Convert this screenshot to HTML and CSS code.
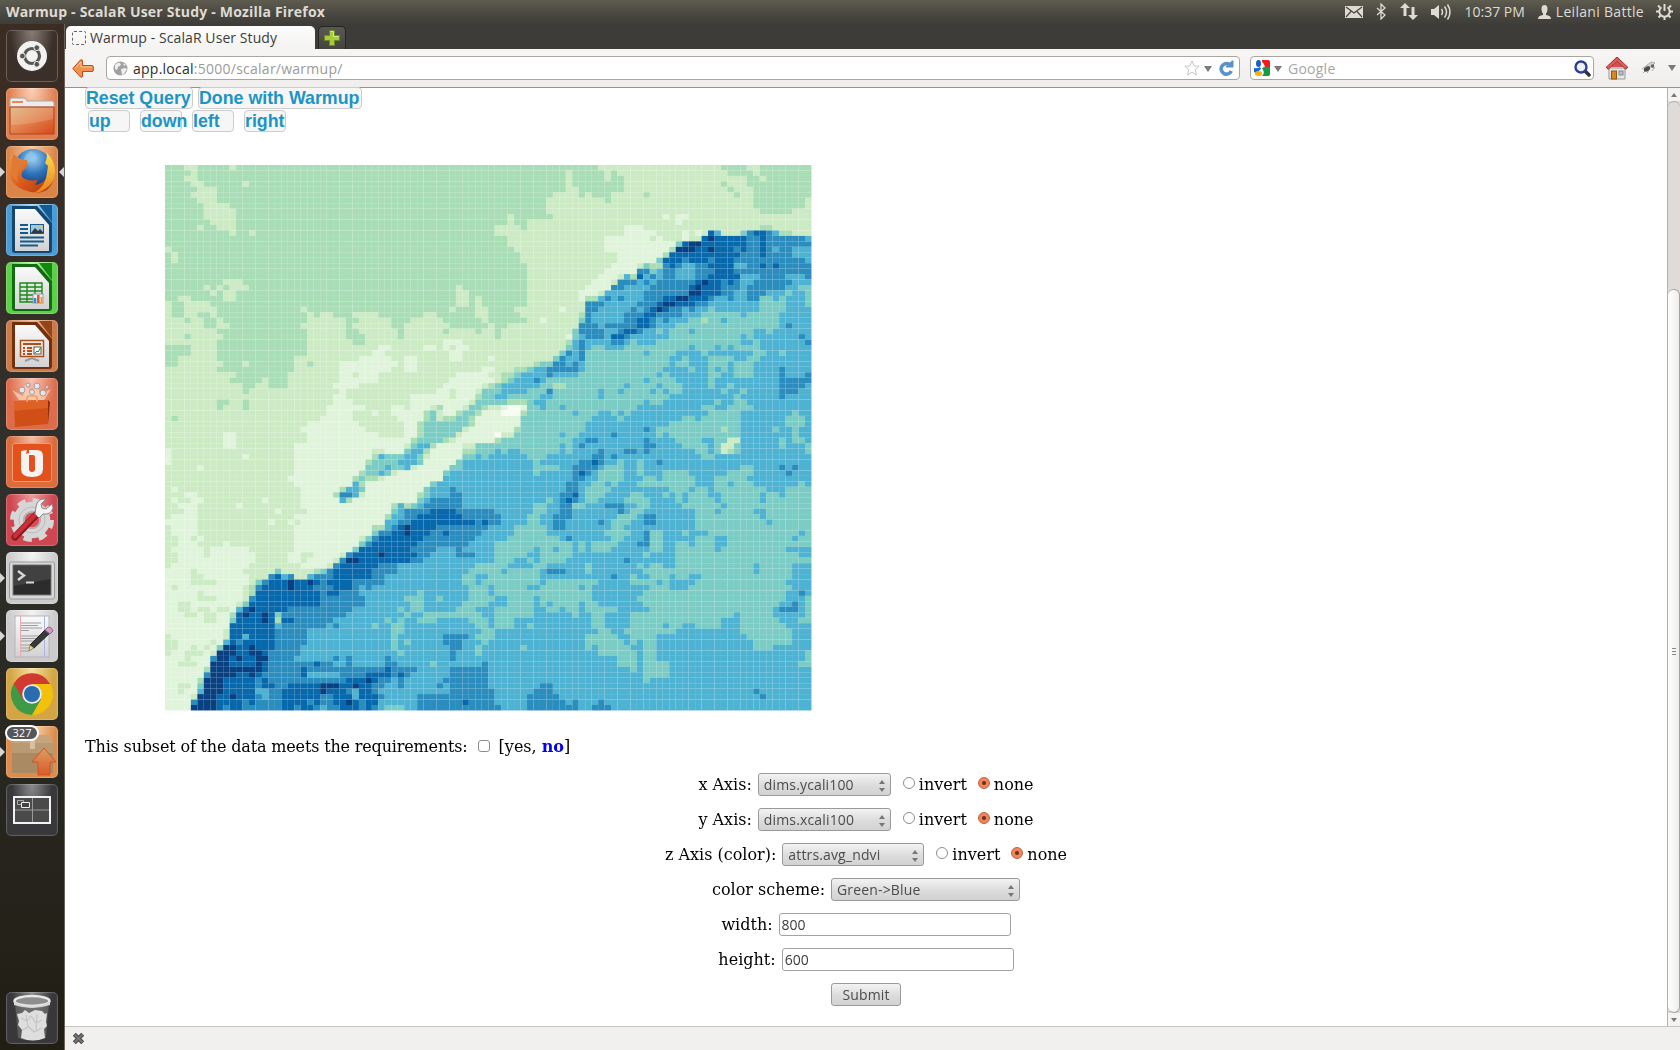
FILE: index.html
```html
<!DOCTYPE html>
<html lang="en">
<head>
<meta charset="utf-8">
<title>Warmup - ScalaR User Study</title>
<link rel="stylesheet" href="styles.css">
</head>
<body>
<svg width="0" height="0" class="defs" aria-hidden="true">
  <defs>
    <linearGradient id="paper" x1="0" y1="0" x2="0" y2="1"><stop offset="0" stop-color="#fafafa"/><stop offset="1" stop-color="#d2d2d2"/></linearGradient>
    <linearGradient id="folder" x1="0" y1="0" x2="1" y2="1"><stop offset="0" stop-color="#dcb078"/><stop offset=".45" stop-color="#e2844e"/><stop offset="1" stop-color="#d8481c"/></linearGradient>
    <linearGradient id="fox" x1="0" y1="0" x2="1" y2="1"><stop offset="0" stop-color="#f0a040"/><stop offset=".5" stop-color="#dd5a1c"/><stop offset="1" stop-color="#a8380c"/></linearGradient>
    <linearGradient id="flame" x1="0" y1="0" x2="0" y2="1"><stop offset="0" stop-color="#fbe24c"/><stop offset="1" stop-color="#e8801c"/></linearGradient>
    <radialGradient id="globe" cx=".5" cy=".25" r=".8"><stop offset="0" stop-color="#9fd4f4"/><stop offset=".5" stop-color="#2f74bc"/><stop offset="1" stop-color="#12336e"/></radialGradient>
    <linearGradient id="arrow" x1="0" y1="0" x2="0" y2="1"><stop offset="0" stop-color="#d8a060"/><stop offset="1" stop-color="#dc5a28"/></linearGradient>
  </defs>
</svg>

<header class="panel">
  <span class="panel-title">Warmup - ScalaR User Study - Mozilla Firefox</span>
  <div class="indicators">
    <svg class="i-mail" width="18" height="12" viewBox="0 0 18 12"><rect width="18" height="12" fill="#dfdbd2"/><path d="M1 1l8 6 8-6M1 11l5-5.500M17 11l-5-5.500" fill="none" stroke="#45443e" stroke-width="1.200"/></svg>
    <svg class="i-bt" width="10" height="17" viewBox="0 0 10 17"><path d="M1 5l8 7-4 4V1l4 4-8 7" fill="none" stroke="#dfdbd2" stroke-width="1.300"/></svg>
    <svg class="i-net" width="18" height="17" viewBox="0 0 18 17"><path d="M5 0l5 5H6.500v8h-3V5H0zM13 17l-5-5h3.500V4h3v8H18z" fill="#dfdbd2"/></svg>
    <svg class="i-vol" width="21" height="18" viewBox="0 0 21 18"><path d="M0 6h3l5-4v14l-5-4H0z" fill="#dfdbd2"/><path d="M10.500 6q2 3 0 6M13.500 3.500q4 5.500 0 11M16.500 1.500q5 7.500 0 15" fill="none" stroke="#dfdbd2" stroke-width="1.500"/></svg>
    <span class="clock">10:37 PM</span>
    <svg class="i-user" width="13" height="14" viewBox="0 0 13 14"><path d="M3.500 4q0-4 3-4t3 4q0 3-1.500 4.500V10q5 .5 5 4H0q0-3.500 5-4V8.500Q3.500 7 3.500 4z" fill="#dfdbd2"/></svg>
    <span class="user">Leilani Battle</span>
    <svg class="i-gear" width="17" height="17" viewBox="0 0 17 17"><g fill="none" stroke="#dfdbd2"><path d="M5.500 4.300a5.200 5.200 0 1 0 6 0" stroke-width="2"/><path d="M8.500 1v7M8.500 14v3M0 8.500h3M14 8.500h3M2 2.500l2 2M15 2.500l-2 2M2.500 14.500l2-2M14.500 14.500l-2-2" stroke-width="2"/></g></svg>
  </div>
</header>

<div class="desktop">
  <nav class="launcher">
    <div class="tile dash"><svg viewBox="0 0 52 52"><circle cx="26" cy="26" r="15" fill="#f2f2f2"/><circle cx="26" cy="26" r="7.500" fill="none" stroke="#5a5550" stroke-width="3.200"/><g fill="#5a5550" stroke="#f2f2f2"><circle cx="16.400" cy="26" r="2.900"/><circle cx="30.800" cy="17.700" r="2.900"/><circle cx="30.800" cy="34.300" r="2.900"/></g></svg></div>
    <div class="tile orange"><svg viewBox="0 0 52 52"><path d="M4 19v-7q0-2 2-2h12q2 0 3 3h25q2 0 2 2v4z" fill="#ececec" stroke="#a8a8a8"/><path d="M6 13h11v2H6z" fill="#f08850"/><path d="M4 19h44v27H4z" fill="url(#folder)" stroke="#b8441c"/><path d="M5 20h42v11Q28 36 5 37z" fill="#fff" opacity=".16"/></svg></div>
    <div class="tile orange running active"><svg viewBox="0 0 52 52"><circle cx="27" cy="22" r="19" fill="url(#globe)"/><path d="M25 5q7 3 5 8-6 1-8 5l-5-2q2-8 8-11z" fill="#93c8ea" opacity=".65"/><path d="M6 8q5 2 8 5l7 1 1 5-6 7q-2 5 3 7 9 3 13 0l-3 6q9-1 12-9l1-9 4 4q4 10-4 18Q33 50 18 44 4 38 3 26 3 15 6 8z" fill="url(#fox)"/><path d="M40 6q9 9 9 19 0 12-10 18-5 4-11 4 12-7 13-20l1-7-3-3q3-6 1-11z" fill="url(#flame)"/><path d="M7 8q4 2 6 6l8 1-1 3-7 6q-4 6 0 13Q4 31 5 22q0-7 2-14z" fill="#e07a34"/></svg></div>
    <div class="tile writer"><svg viewBox="0 0 52 52"><path d="M6 2h25l15 17v27q0 3-3 3H9q-3 0-3-3z" fill="#14466f"/><path d="M33 1h13v17z" fill="#155a90"/><path d="M9 5h20l14 16v26H9z" fill="url(#paper)"/><path d="M14 21h8M14 25h8M14 29h8M14 33.500h24M14 37.500h24M14 41.500h18" stroke="#155c8c" stroke-width="1.900"/><rect x="24" y="20" width="14" height="10" fill="#155c8c"/><rect x="25" y="21" width="12" height="8" fill="#9cc8e4"/><path d="M25 29l4-5 3 3 2-2 3 3v1z" fill="#2d3a40"/><circle cx="35" cy="23" r="1.300" fill="#f4c440"/></svg></div>
    <div class="tile calc"><svg viewBox="0 0 52 52"><path d="M6 2h25l15 17v27q0 3-3 3H9q-3 0-3-3z" fill="#136a12"/><path d="M33 1h13v17z" fill="#17880f"/><path d="M9 5h20l14 16v26H9z" fill="url(#paper)"/><path d="M14 21h22v19H14zM14 25h22M14 29h22M14 33h22M14 37h22M21 21v19M29 21v19" fill="none" stroke="#1c8a1a" stroke-width="1.400"/><rect x="27" y="32" width="10" height="9" fill="#eee" stroke="#999"/><path d="M29 36v5" stroke="#2f8cd8" stroke-width="2.500"/><path d="M32.300 33v8" stroke="#e05820" stroke-width="2.500"/><path d="M35.500 35v6" stroke="#e8a030" stroke-width="2"/></svg></div>
    <div class="tile impress"><svg viewBox="0 0 52 52"><path d="M6 2h25l15 17v27q0 3-3 3H9q-3 0-3-3z" fill="#70300e"/><path d="M33 1h13v17z" fill="#93441a"/><path d="M9 5h20l14 16v26H9z" fill="url(#paper)"/><rect x="14.500" y="20.500" width="23" height="16" fill="#f4e8e0" stroke="#a8501e" stroke-width="1.500"/><path d="M17 24h18" stroke="#a8501e" stroke-width="2"/><path d="M17 28h2M17 31h2M17 34h2M21 28h5M21 31h5M21 34h5" stroke="#b05020" stroke-width="2"/><rect x="28" y="27" width="7" height="7" fill="#fff" stroke="#555"/><path d="M29 33l2-2 1 1 2.500-4" fill="none" stroke="#1c8a1a"/><path d="M19 41l7-3 7 3" fill="none" stroke="#999" stroke-width="2"/></svg></div>
    <div class="tile store"><svg viewBox="0 0 52 52"><path d="M13 22L6 12l11 6 2-12 7 10 5-11 3 12 11-6-7 11z" fill="#ffe6c8" opacity=".6"/><g fill="#e4e4ea" stroke="#9c8c8c" stroke-width=".8"><circle cx="16" cy="12" r="3"/><circle cx="31" cy="8" r="3"/><circle cx="26" cy="14" r="2.500"/><circle cx="37" cy="15" r="3"/><circle cx="22" cy="7" r="2"/><circle cx="41" cy="9" r="1.500"/></g><path d="M8 23l34-1v24l-33 3z" fill="#d24e17"/><path d="M42 22l2 2-2 22z" fill="#8a2c08"/><path d="M8 23l34-1v8L8 33z" fill="#e2682c" opacity=".7"/><path d="M21 24v-4q0-2 2-2h6q2 0 2 2v4" fill="none" stroke="#f0a060" stroke-width="1.600"/></svg></div>
    <div class="tile one"><svg viewBox="0 0 52 52"><rect x="6.500" y="7.500" width="39" height="38" rx="2" fill="#e3511d" stroke="#f49a6c"/><path d="M15 15l6-1-1 4 3-1v16q0 3 3 3t3-3V21q0-2-2-2h-4v-5h8q6 0 6 6v13q0 8-11 8t-11-8z" fill="#f6f2f0"/></svg></div>
    <div class="tile settings"><svg viewBox="0 0 52 52"><circle cx="26" cy="26" r="13.500" fill="none" stroke="#d6d6d6" stroke-width="9.500"/><circle cx="26" cy="26" r="19.500" fill="none" stroke="#d6d6d6" stroke-width="5" stroke-dasharray="8.300 7.020"/><circle cx="26" cy="26" r="13" fill="none" stroke="#bdbdbd" stroke-width="1"/><circle cx="26" cy="26" r="8" fill="#d5525a" stroke="#b5b5b5" stroke-width="1.500"/><path d="M9 43l21-22" stroke="#8e1820" stroke-width="7" stroke-linecap="round"/><path d="M9 42l21-22" stroke="#c8303a" stroke-width="4.500" stroke-linecap="round"/><path d="M29 20l4 4 4-4q8 1 10-6l-1-4-6 5-4-1-1-4 5-5q-9-1-10 8z" fill="#f2f2f2" stroke="#888" stroke-width="1"/></svg></div>
    <div class="tile silver running"><svg viewBox="0 0 52 52"><rect x="3.500" y="10" width="45" height="37" rx="2" fill="#d8d8d8" stroke="#9a9a9a"/><rect x="7" y="13" width="38" height="30" fill="#2c2c2c" stroke="#777"/><path d="M8 14h36v13L8 34z" fill="#fff" opacity=".1"/><path d="M12 19l6 4.500-6 4.500" fill="none" stroke="#d8d8d8" stroke-width="2.400"/><path d="M20 30.500h8" stroke="#d8d8d8" stroke-width="2"/></svg></div>
    <div class="tile silver running"><svg viewBox="0 0 52 52"><rect x="9" y="6" width="34" height="41" fill="url(#paper)" stroke="#b5b5b5"/><path d="M14.500 6v41" stroke="#eda8b0"/><path d="M38.500 6v41" stroke="#aab4ea"/><path d="M15 13h20M15 15.500h17M15 18h21M15 20.500h8M15 26h21M15 28.500h16M15 31h18M15 35h12M15 38h9M15 41h8" stroke="#9e9e9e"/><path d="M24 35l17-17 4 4-17 16z" fill="#3a3a3a" stroke="#222"/><path d="M24 35l4 3-5 3z" fill="#e8d878" stroke="#444" stroke-width=".5"/><path d="M39 20l3-3q4 0 5 4l-3 3z" fill="#d898c8" stroke="#8a6a80"/></svg></div>
    <div class="tile chrome"><svg viewBox="0 0 52 52"><circle cx="26" cy="26" r="21" fill="#f2c10c"/><path d="M26 26L7.800 15.500A21 21 0 0 0 26 47l9-15.700z" fill="#3f9a48"/><path d="M26 26l-9 5.300L7.800 15.500A21 21 0 0 1 44.200 16H26z" fill="#d13a30"/><circle cx="26" cy="26" r="9.800" fill="#e8eef2"/><circle cx="26" cy="26" r="8" fill="#2a6cb0"/></svg></div>
    <div class="tile updater running"><svg viewBox="0 0 52 52"><path d="M6 17l4-8h33l4 8z" fill="#c6a57c"/><path d="M6 17h41v30H6z" fill="#a98a62"/><path d="M6 17h41v10H6z" fill="#b99a72"/><path d="M24 9h5v14h-5z" fill="#d8c0a0"/><path d="M38 22l12 14h-6v13H32V36h-6z" fill="url(#arrow)" stroke="#d4502a"/></svg><span class="badge">327</span></div>
    <div class="tile workspaces"><svg viewBox="0 0 52 52"><rect x="8" y="13" width="36" height="26" fill="#4a4a4a" stroke="#f2f2f2" stroke-width="2"/><path d="M9 26h34M26.500 14v24" stroke="#999"/><path d="M11.500 16.500h6v4h-6z" fill="none" stroke="#aaa"/><path d="M15.500 18.500h8v5h-8z" fill="#444" stroke="#eee"/></svg></div>
    <div class="tile trash"><svg viewBox="0 0 52 52"><path d="M9 9l3 37q13 5 28 0l3-37z" fill="#77777a" opacity=".55"/><path d="M11 22l5-1 3-3 4 3 6-3 7 1 3 3 2-1-1 9 1 4-3 3 1 9q-12 5-24 0l1-8-4-5 1-4z" fill="#dedede"/><path d="M15 26l6 3 4-5 5 7 6-3M16 38l7-3 5 5 8-4M20 23l2 12M31 22l-1 17" fill="none" stroke="#c4c4c4" stroke-width="1.100"/><ellipse cx="26" cy="9" rx="17.500" ry="5" fill="#8e8e8e" stroke="#e8e8e8" stroke-width="2.500"/><path d="M8 10q18 8 36 0v3q-18 6-36 0z" fill="#d8d8d8"/></svg></div>
  </nav>

  <main class="window">
    <div class="tabs">
      <div class="tab"><span class="favicon"></span><span class="tab-text">Warmup - ScalaR User Study</span></div>
      <div class="newtab"><svg width="16" height="16" viewBox="0 0 16 16"><path d="M5.500.5h5v5h5v5h-5v5h-5v-5h-5v-5h5z" fill="#a4cc3c" stroke="#6c8a24"/><path d="M6.500 1.500h3v5h5" fill="none" stroke="#d4ec94"/></svg></div>
    </div>

    <div class="toolbar">
      <svg class="back" width="22" height="19" viewBox="0 0 22 19"><path d="M.8 9.500L8.500 1q2-1 2 1v4.500H20q1.300 0 1.300 1.300v3.400q0 1.300-1.300 1.300h-9.500V17q0 2-2 1z" fill="#f0914e" stroke="#c04c1c"/><path d="M3 9.500L9 3v5h11" fill="none" stroke="#fcd0a0" stroke-width=".8"/></svg>
      <div class="urlbar">
        <svg class="globe" width="15" height="15" viewBox="0 0 15 15"><circle cx="7.500" cy="7.500" r="7" fill="#a0a0a0"/><path d="M2 4q3-3 5-2l1 2-3 2-1 3-2-1zM8 8l4-1 2 1-3 5-2 1zM10 2l3 2-2 1z" fill="#efefef"/></svg>
        <span class="url"><b>app.local</b>:5000/scalar/warmup/</span>
        <svg class="star" width="16" height="16" viewBox="0 0 16 16"><path d="M8 1l2.100 4.800 5.100.5-3.900 3.500 1.200 5.200L8 12.300 3.500 15l1.200-5.200L.8 6.300l5.100-.5z" fill="#fdfdfd" stroke="#c6c6c6"/></svg>
        <i class="caret c1"></i>
        <svg class="reload" width="16" height="16" viewBox="0 0 16 16"><path d="M11.500 4.500A5.300 5.300 0 1 0 13.300 11" fill="none" stroke="#5c92cc" stroke-width="3.600"/><path d="M8 7.500V6l3-2.500 3-3H15.500v7z" fill="#5c92cc"/></svg>
      </div>
      <div class="search">
        <svg class="goog" width="16" height="16" viewBox="0 0 16 16"><path d="M8 0h6q2 0 2 2v5H11q-1-4-3-5z" fill="#ee1c1c"/><path d="M8 8q3-2 8-1v7q0 2-2 2H8q3-3 1-6z" fill="#159a45"/><ellipse cx="4.500" cy="3.500" rx="2.500" ry="3.600" fill="#1660c8"/><path d="M0 8q3 1 6-1l1 2-5 4-2-1z" fill="#1a64cc"/><ellipse cx="4.500" cy="13.500" rx="3.600" ry="2.500" fill="#f4b400"/></svg>
        <i class="caret c2"></i>
        <span class="search-text">Google</span>
        <svg class="lens" width="17" height="17" viewBox="0 0 17 17"><path d="M11 11l4 4" stroke="#333" stroke-width="3.500" stroke-linecap="round"/><circle cx="7" cy="7" r="5.500" fill="#eef2fa" stroke="#2c3c98" stroke-width="2.400"/></svg>
      </div>
      <svg class="home" width="22" height="23" viewBox="0 0 22 23"><path d="M3 11h16v11H3z" fill="#e6e6e6" stroke="#999"/><rect x="5.500" y="14" width="5" height="8" fill="#d48a1c" stroke="#8c5a10"/><rect x="13" y="14" width="4" height="4" fill="#aac4dc" stroke="#888"/><path d="M3.500 10L11 3l7.500 7z" fill="#d45050"/><path d="M1 11.500L11 2l10 9.500" fill="none" stroke="#8e2020" stroke-width="3.600"/><path d="M1.500 11L11 2.200 20.500 11" fill="none" stroke="#dc5c5c" stroke-width="2.600"/></svg>
      <svg class="bug" width="16" height="14" viewBox="0 0 16 14"><path d="M1 8l4-3M2 12l4-4M6 12l2-3M11 10l2-3M14 7l-4-1" stroke="#aaa"/><path d="M5 5l5-4 4 1-4 4z" fill="#d4d4d4" stroke="#aaa"/><ellipse cx="6" cy="8" rx="3.400" ry="2.200" fill="#4a4a4a" transform="rotate(-30 6 8)"/><circle cx="11.500" cy="5" r="1.800" fill="#666"/></svg>
      <i class="caret c3"></i>
    </div>

    <div class="viewport">
      <div class="page">
        <div class="btns first"><span class="btn">Reset Query</span><span class="btn done">Done with Warmup</span></div>
        <div class="btns moves"><span class="btn">up</span><span class="btn">down</span><span class="btn">left</span><span class="btn">right</span></div>
        <canvas id="map" class="map" width="647" height="546"></canvas>
        <div class="ask"><span class="q">This subset of the data meets the requirements:</span><i class="check"></i><span class="yn">[yes, <b>no</b>]</span></div>
        <form class="form">
          <div class="row"><span>x Axis:</span><div class="select w1"><span>dims.ycali100</span></div><i class="radio"></i><span>invert</span><i class="radio on"></i><span>none</span></div>
          <div class="row"><span>y Axis:</span><div class="select w1"><span>dims.xcali100</span></div><i class="radio"></i><span>invert</span><i class="radio on"></i><span>none</span></div>
          <div class="row"><span>z Axis (color):</span><div class="select w2"><span>attrs.avg_ndvi</span></div><i class="radio"></i><span>invert</span><i class="radio on"></i><span>none</span></div>
          <div class="row"><span>color scheme:</span><div class="select w3"><span>Green-&gt;Blue</span></div></div>
          <div class="row"><span>width:</span><div class="input">800</div></div>
          <div class="row"><span>height:</span><div class="input">600</div></div>
          <div class="row"><div class="submit">Submit</div></div>
        </form>
      </div>
      <div class="scroll"><div class="up"><i></i></div><div class="gap"></div><div class="thumb"><i></i><i></i><i></i></div><div class="down"><i></i></div></div>
    </div>

    <footer class="status"><svg width="13" height="13" viewBox="0 0 13 13"><path d="M2.300 2.300l8.400 8.400M10.700 2.300l-8.400 8.400" stroke="#4a4a4a" stroke-width="4.200"/><path d="M2.600 2.600l7.800 7.800M10.400 2.600l-7.800 7.800" stroke="#777" stroke-width="2"/></svg></footer>
  </main>
</div>
<script src="map.js"></script>
</body>
</html>
```

FILE: map.js
```js
// One string per grid row: each run is its first column followed by its shade, a (lowest) to i (highest).
const rows = [
"0d3c5d10c11d67c86d90c92d",
"0d4c5d62c63d68c69d70c87d91c92d",
"0d3c5d62c63d68c69d71c90d92c93d",
"0d4c6d12c13d62c63d71c86d87c90d",
"0d5c8d62c64d71c87d88c91d",
"0d4c8d60c64d65c66d69c74d75c88d89c91d",
"0d5c8d59c68d69c91d99c",
"0d6c10d59c91d99c",
"0d6c11d59c92d97c",
"0d6c11d53c54d60c77b78c79b81c",
"0d7c11d53c54d56c79b80c",
"0d5c6d8c11d51c55d56c71b74c92d94c",
"0d10c11d13c14d51c71b76c80b81c82b83c84h85f86c89e90g91h93g94f95d97c",
"0d53c68b75c76b77c80b81c83h84i85h90g92h93g99f",
"0d53c68b79e80h81i83h90g92h93g",
"0c1d54c68b78d79i82h84i85h88g89h90g92h93g94f95g97f",
"0d1c2d55c70b77d78h89g92h93g97f",
"0d1c2d55c70b76e77h80g81h84g85h88g99f",
"0d56c69b73c74e75d77g78h79g80f82g84h88f90g92h93g94h95g",
"0d56c68b73g75e76f77g79f82g85h88g",
"0d56c67b70c71f72d73h74f75g76f77g79f82g84h89f92g96f99g",
"0d9c12d56c66b69c70g73f74g75f76g82h83i84h86g87h88g89f91g97f",
"0d6c7d8c9d10c13d45c46d56c65b69g71f75g81h82i83h86g89f90g96f98e",
"0d7c8d9c11d45c47d56c64b67c68f74g81i83h86g88f90g93f96e97f99e",
"0d2c4d9c11d45c47d48c49d56c64b65d67f68g69f70g71f74g77h79i81h84g85f87g88f90g92e94f95e96f99e",
"0c1d3c7d45c47d48c49d56c65g68f73g76h77i79h82g84f92e96f99e",
"0c1d3c8d21c22d44c45d48c50d54c61b62c65g67f72g73f74g75h76i77h78g80f81g82f84e85f92e96f",
"0c1d3c5d7c8d22c23d24c26d29c33d40c42d48c50d55c64d65g66f71g74h76g80f83e89f90e95f",
"0c3d4c6d8c9d22c28d30c35d38c43d49c50d56c58b59c64e65g66f71g73h75g76f77g78f81e83d84e86f87e95f",
"0c6d8c10d21c28d29c35d37c44d50c51d53c64g67f68g73h75g76f79e95f96g97f",
"0c8d22c28d30c36d37c43d44c48d49c51d52c63e64g68f70g71h73g74f76e77f78e81f82e91f93e94f",
"0c3d4c9d22c28d31c36d37c51d52c62b63e64f65g68f69h71g72f78e89f90e91f98g99f",
"0c8d22c29d31c43b46c62d63f64g65f69g71f72e73f76e89f91e92f99g",
"0d4c8d22c33b35c40b42c43b44c45b47c62e63f64g65f66e68f71e81f82e85f86e87f88e90f90e92f",
"0d4c8d22c32b34c44b46c61e62g63f64g65e74f75e79f83e84f91e93f95e96f",
"0d2c8d20c30b35c37b39c44b46c50b51c60e61g62f64g65e78f80e81f84e88f90e92f",
"0d2c9d12c13d20c22d23c27b36c37b39c57d58e60g62f63g64f65e78f79e81f84e87f88e91f",
"0c8d20c27b35c37b39c49b51c54d56e57f59g64f65e77f81e82f84e85f86e87f88e91f95g96f",
"0c11d19c27b29c30b33c45b50c52d54e55f59g60f64e76f77e78f84e86f88e91f95g96f99g",
"0c10d15c16d19c27b33c44b51c52d53e54f57g58f59e74f75e77f77e79f84e85f95g",
"0c12d14c16d19c26b30c43b49c50d51e52f58e60d62e71f72e76f77e80f84e85f87e88f95g99f",
"0c12d13c27b28c42b44c45b48c49e52f56e59g60e67f68e70f71e75f76e77f78e80f86e87f89e90f95g98f",
"0c26b28c38b44c45b48d49e51f53e58f60e67f68e78f88e89f95g96f",
"0c8d10c12d13c26b29c38b47c48e53d56e57f59e74f75e77f85e86f88e90f",
"0c8d9c12d13c25b31c35b37c38b41c42d43b46c47e49d50c52b53a55b56e58f59e61f62e73f83e85f87e91f",
"0c25b29c32b33c35b40d41e42c43b45d46e48d49b52a55d56e63f64e67f69e70f71e72f84e89f97e98f",
"0c1d2c24b29c36b40d41e42c43d45e47d48b55e66f70e71f80e82f83e89f96e99f",
"0c22b30c37b39d40e47d48b55e65f78e89f96e99f",
"0c21b31c37b39d40e46c47b54d55e65f74g75f76e77f77e86d87e89f94e95f97e98f",
"0c9b11c22b33c37b39d40e45c46b51a52c54e61f62e64f69g70f76e77f78e89f97e98f",
"0c9b11c22b38d39e43d44c45b51d52e63f65g67f74g75f79e83f85e87c89f95e96f97e99f",
"0c9b11c20b37c38e39f41d42b46c48e61f62e63f64g65f74g76f80e84f85e86c88e89f95e96f99e",
"0b1c20b32c34b37e38f40d41b46d48e51f52e53f55e61f62e63f67g68f71g73f74g75f82e84f85e86c87d88e89f99e",
"0b1c12b13c20b32d33f34e37f39e40c41b46e48f49e50f56e59f66g68f69g70f83e85f",
"0b1c20b31d32e36f39e40b45e46f57e58f64g66h67g68f70e71f73e74f76g77f",
"0c5b6c20b31e34f35e37f38c39b44e46f57e61f63g67f68e71f73e74f89e91f95g96f97g98f",
"0c20b30d31e33f34e35c36b43e44f57e58f63g64h65g66f67e71f73e74f77e81f87e91f96g97f",
"0c19b29d30e31d33c34b43f63g65f67e71f74e76f77e82f85e90f",
"0c20b29f30d31b41e42f62g64f66e68f69e70f73e82f85e87f88e91f98e99f",
"0c1b2c21b27d28f30e31b40e41f44g45f62g64f65e69f78e81f82e84f85e93f96e",
"0c3b5c21b26d27g29f30c31b39d40e41f44g46f61g63h64f65e68f72e74f77e78f79e80f81e84f86e92f93e95f96e",
"0c1b2c4b6c15b16c21b27f28d29b39e40f41g46f59e60f61g62h63g64f65e67f71e75f79e80f81e85f86e92f93e",
"0c2b5c11b12c21b35d36f37d38e39f40g46f57e59f61g63e65f68g71f73e75f80e82f82e86f87e",
"0c3b5c17b18c22b35e36f37g41h45g51f57e59f61g63f70g71f72e74f82e85f86e91f93e",
"0c1b5c20b34d35f37g39h46g52f56e58f60g63f70e73f74g76f82e92f93e",
"0b5c16b17c19b20c21b34f36g38h48g49h50g52f56e58f60g62f67g68f69e72f74g76f82e93f94e",
"0c1b5c20b32d34f35g36h37i38h42g43h43g50f54e59f60g62f69e71f72e72f82e",
"0c1b5c20b32e33g35h37i38h41g43h44g49f54e59f68e72f74g75e77f80e81f84e98f99e",
"0c2b4c5b6c20b30c31e32g33h40g48f53e61f62g63f69e71f74g75e77f82e85f87e97f98e",
"0c2b5c9b10c20b30e31g32h39g47f51e63f64e65f66e70f73g75e77f79e81f82e85f87e",
"0c1b6c7b13c20b29e30h38g42f45g46f51e57f58e60f61e63f64e65f66e69f75e77f79e85f86e96f",
"0c2b6c7b14c19b21c23b27c28g29h33i34h39g41f45g48f51e56f58e63f74e75f79e98f",
"0c2b14c19b21c22b26c27g28i30h38g40f51e54f56e57f58e62f71g72f79e",
"0c1b13c21b25c26g27h33g36f48e53f57e59f65e66f73e74f75e77f79e91f92e97f",
"0b4c5b12c17e18c23d24e25g26h32g36f47e52f53e58f59g62f65e66f74e91f92e97f",
"0b4c6b13c16g17h18f19g20c22f23g26h32g34f46e48f50e58f69g70f72e73f75e78f79e81f83e97f",
"0b4c8b13c14e15g16h19i20h22i23h24g25h29g34f46e48f49e58f59e67f72e76f77e78f82e96f",
"0b1c2b12c13d14g15h19i20h23g26h29g30f31g32f47e50f51e56f58e64f65e66f75e78f81e97f",
"0b5c6b12c13d14h24g25h27g30f39e40f47e50f51e66f74e96f98g99f",
"0b5c8b12c13g14h24g31f37e40f42e43f47e51f53e57f58e66f73e96f99e",
"0b2c4b11c12e13h24g31f38e40f46e50f53e57f58e59f60e64f65e67f74e95f97g98f99e",
"0b2c4b5c7b8c10b11f12h13i14h19g29f36e37f38e40f45e48f51e57f59e61f62e64f65e70f75e94f95g98f99e",
"0b3c5b6c8b10d11h12i13h15i16h17e18g28f37e38f40e49f51e57f63e64f66e68f72e88f89e94f99e",
"0b6c8b10e11h15i16h17d18h20g26f34e35f36e37f39e42f47e50f51e54f66e68f72e86f89e95f98e",
"0b10h17f18g25f26g27f32e33f35e37f48e50f51e54f56e57f66e68f72e77f78e80f82e86f89e96f",
"0b9c10h17g22f35e37f49e51f67e69f71e79f89e97f",
"0c1b9c10h12f13h17g22f35e36f43g47f48e51f65e70f72e76f90e97f",
"0c2b7c8b9f10h11g12h17g22f35e36f37e38f43g46f49e50f65e71f72e73f74e76f91e97f",
"0c2b4c5b6c7b8e9i11h13i14h17g21f35e36f44g46f48e49f55e56f65e66f67e72f74e76f91e94f",
"0c1b3c6b7c8i11h13i15h16g21f36e37f44g45f48e49f67e73f74e76f99e",
"0b3c4b7g8i10h11i12h14i16g20f26g27f28g29f34g35f44g45f70e73f74e76f99e",
"0b2c5b7i10h14i15h16g23h24g26f28g29f34g36f41e42f49g50f70e73f74e78f98e",
"0b6d7i15h16g21h22g34h35g39f44g50f72e73f74e78f",
"0b6g7i11h13i14h15g21h22f27g31h35g36h37g38f44g50f74e78f",
"0b5d6i9h14g15h16g28h31i32h33g35f36g37f43g50f74e75f",
"0b2c4b5e6i9h14g15h17g19h24i27h29i30h32g34f36g37f42g43f44g50f58g60f",
"0b2c3b5f6i9h14f16g18h24i25h28g29f30h32g33f44g51f57g60f91g92f",
"0b4c5i8h10i11h14g15f16g18h24g26h29f30h33g34f39g51f56g61f92g93f",
"0b4g5i8h12g13h14g18h22g23h24g26h28i29h30g31h33f39g46h47g51f56g62f63g64f67g68f",
"0b4i8h9g10h12g18h20g21h23g24f25g27h30g31h32g33f34e37f39g52f56g64f66g69f"
];
const shades = ["#f7fcf0", "#e0f3db", "#ccebc5", "#a8ddb5", "#7bccc4", "#4eb3d3", "#2b8cbe", "#0868ac", "#084081"];
const w = 640 / 99, h = 540 / 99;
const ctx = document.getElementById("map").getContext("2d");
rows.forEach((row, y) => {
  const runs = [...row.matchAll(/(\d+)([a-i])/g)];
  runs.forEach((run, k) => {
    const end = k + 1 < runs.length ? +runs[k + 1][1] : 100;
    ctx.fillStyle = shades[run[2].charCodeAt(0) - 97];
    for (let x = +run[1]; x < end; x++) ctx.fillRect(x * w, y * h, w, h);
  });
});
```

FILE: styles.css
```css
* { box-sizing: border-box; }
body { margin: 0; width: 1680px; height: 1050px; overflow: hidden; display: flex; flex-direction: column; background: #fff; font-family: "Open Sans", "Noto Sans", sans-serif; }
svg { display: block; flex: none; }
.defs { position: absolute; }
span { white-space: nowrap; }

.panel { height: 24px; flex: none; display: flex; align-items: center; justify-content: space-between; padding: 0 7px 1px 6px; background: linear-gradient(#5e5b4f, #47453f 65%, #3e3d38); color: #dfdbd2; font-size: 14px; }
.panel-title { font-weight: 700; letter-spacing: 0.19px; }
.indicators { display: flex; align-items: center; }
.i-bt { margin-left: 13px; }
.i-net { margin-left: 14px; }
.i-vol { margin-left: 13px; }
.clock { margin-left: 12px; }
.i-user { margin-left: 13px; }
.user { margin-left: 5px; letter-spacing: 0.3px; }
.i-gear { margin-left: 12px; }

.desktop { flex: 1; min-height: 0; display: flex; }
.launcher { width: 65px; flex: none; display: flex; flex-direction: column; gap: 6px; padding: 6px 0 6px 6px; background: linear-gradient(#3c2c22, #2f302c 45%, #211e14); border-right: 1px solid #6c625c; }
.tile { position: relative; width: 52px; height: 52px; flex: none; border-radius: 5px; box-shadow: inset 0 0 1px 1px rgba(255,255,255,.22); }
.tile svg { width: 52px; height: 52px; }
.dash { background: radial-gradient(ellipse at 50% 0, #8a7f78, transparent 60%), #3b2f29; box-shadow: inset 0 0 0 1px #6b625b; }
.orange { background: radial-gradient(ellipse at 50% 0, #fbd2b8, transparent 65%), #df7e4f; }
.orange.running { background: radial-gradient(ellipse at 50% 0, #f8c8a0, transparent 65%), #db8448; }
.writer { background: radial-gradient(ellipse at 50% 0, #a4d8f6, transparent 60%), #4a9cd6; }
.calc { background: radial-gradient(ellipse at 50% 0, #b4f6a0, transparent 60%), #5cd048; }
.impress { background: radial-gradient(ellipse at 50% 0, #eeb894, transparent 60%), #cb7b4a; }
.store { background: radial-gradient(ellipse at 50% 0, #f8c4b4, transparent 65%), #dd6c4a; }
.one { background: radial-gradient(ellipse at 50% 0, #f4c0a4, transparent 60%), #dc6b3d; }
.settings { background: radial-gradient(ellipse at 50% 0, #f09ca0, transparent 60%), #cd4650; }
.silver { background: radial-gradient(ellipse at 50% 0, #f4f4f4, transparent 65%), #cccacc; }
.chrome { background: radial-gradient(ellipse at 50% 0, #f8e0a0, transparent 60%), #d3a544; }
.updater { background: radial-gradient(ellipse at 50% 0, #fbd8b0, transparent 65%), #dc8c4c; }
.workspaces, .trash { background: radial-gradient(ellipse at 50% 0, #8c8c8e, transparent 55%), #38383a; }
.trash { margin-top: auto; }
.running::before { content: ""; position: absolute; left: -6px; top: 21px; border: 5px solid transparent; border-left-color: #d6d6d6; border-right: 0; }
.active::after { content: ""; position: absolute; right: -6px; top: 21px; border: 5px solid transparent; border-right-color: #d6d6d6; border-left: 0; }
.badge { position: absolute; left: -1px; top: -1px; width: 34px; height: 16px; border: 2px solid #fff; border-radius: 8px; background: #55565a; color: #fff; font-size: 11px; line-height: 12px; text-align: center; }

.window { flex: 1; min-width: 0; display: flex; flex-direction: column; }
.tabs { height: 25px; flex: none; background: #3d3c38; display: flex; align-items: flex-end; gap: 3px; padding-left: 1px; }
.tab { width: 249px; height: 23px; border-radius: 5px 5px 0 0; background: linear-gradient(#fcfcfc, #f4f3f2); display: flex; align-items: center; padding-left: 6px; gap: 4px; color: #3c3c3c; font-size: 14px; letter-spacing: 0.08px; }
.favicon { width: 14px; height: 14px; border: 1px dashed #666; border-radius: 2px; }
.newtab { width: 28px; height: 23px; border: 1px solid #272622; border-bottom: 0; border-radius: 5px 5px 0 0; background: linear-gradient(#5a5852, #45443f); display: flex; align-items: center; justify-content: center; }

.toolbar { height: 39px; flex: none; background: linear-gradient(#f6f5f4, #f0efed); border-bottom: 1px solid #93928f; display: flex; align-items: center; padding: 0 4px 0 7px; }
.urlbar, .search { height: 24px; border: 1px solid #a9a6a2; border-radius: 4px; background: #fff; display: flex; align-items: center; color: #9c9a98; font-size: 14px; }
.urlbar { width: 1134px; margin-left: 12px; padding: 0 5px 0 6px; }
.url { margin-left: 5px; flex: 1; letter-spacing: 0.25px; }
.url b { font-weight: 400; color: #2c2c2c; }
.caret { width: 0; height: 0; border: 4px solid transparent; border-top: 6px solid #7c7a78; border-bottom: 0; }
.c1 { margin: 2px 6px 0 4px; }
.search { width: 344px; margin-left: 10px; padding: 0 2px 0 3px; }
.c2 { margin: 2px 6px 0 4px; }
.search-text { flex: 1; color: #a8a6a4; letter-spacing: 0.25px; }
.home { margin-left: 12px; }
.bug { margin-left: 13px; }
.c3 { margin-left: auto; }

.viewport { flex: 1; min-height: 0; display: flex; background: #fff; }
.page { flex: 1; min-width: 0; padding: 0 20px; display: flex; flex-direction: column; font: 16px "DejaVu Serif", serif; color: #000; }
.btns { display: flex; height: 23px; flex: none; align-items: flex-start; font: bold 17.8px "Liberation Sans", Arial, sans-serif; color: #1c94c4; }
.btn { height: 22px; line-height: 20px; border: 1px solid #ccc; border-radius: 4px; background: #f6f6f6; }
.first { height: 22px; gap: 5px; }
.first .btn { width: 108px; margin-top: -1px; }
.first .done { width: 164px; }
.moves { padding-left: 3px; gap: 10px; }
.moves .btn { width: 42px; }
.map { display: block; flex: none; width: 647px; height: 546px; margin: 32px 0 0 80px; }
.ask { height: 23px; flex: none; display: flex; align-items: center; margin-top: 24px; }
.q { letter-spacing: -0.16px; }
.check { width: 12px; height: 12px; border: 1px solid #8e8c8a; border-radius: 3px; margin: -2px 9px 0 10px; }
.ask b { color: #0000ff; }
.form { margin: 15px 0 0; display: flex; flex-direction: column; gap: 12px; align-items: center; }
.row { height: 23px; display: flex; align-items: center; }
.select, .submit { height: 23px; border: 1px solid #9c9a98; border-radius: 3px; background: linear-gradient(#f3f3f3, #dcdcdc 55%, #d2d2d2); color: #4c4c4c; font: 14px "Open Sans", sans-serif; line-height: 21px; letter-spacing: 0.15px; }
.select { position: relative; margin-left: 6px; padding-left: 5px; }
.w1 { width: 133px; }
.w2 { width: 142px; }
.w3 { width: 189px; }
.select::before, .select::after { content: ""; position: absolute; right: 5px; border: 3px solid transparent; }
.select::before { top: 6px; border-bottom: 4px solid #777; border-top: 0; }
.select::after { bottom: 3px; border-top: 4px solid #777; border-bottom: 0; }
.radio { width: 12px; height: 12px; border: 1px solid #8e8c8a; border-radius: 50%; background: #fff; margin: -3px 4px 0 12px; }
.radio.on { margin-left: 11px; border-color: #b8643f; background: radial-gradient(circle, #6c3420 0 1.5px, #f3845a 2.5px); }
.input { width: 232px; height: 23px; margin-left: 6px; padding-left: 2px; border: 1px solid #a4a29e; border-radius: 3px; font: 14px "Open Sans", sans-serif; line-height: 21px; color: #3c3c3c; }
.submit { width: 70px; text-align: center; }

.scroll { width: 13px; flex: none; display: flex; flex-direction: column; background: #dedbd8; border-left: 1px solid #b4b1ad; }
.up, .down { height: 13px; background: #f4f3f2; display: flex; align-items: center; justify-content: center; }
.up i { border: 3px solid transparent; border-top: 0; border-bottom: 4px solid #777; }
.down i { border: 3px solid transparent; border-bottom: 0; border-top: 4px solid #777; }
.gap { height: 188px; border-top: 1px solid #aaa; border-radius: 6px 6px 0 0; }
.thumb { flex: 1; border: 1px solid #a5a29e; border-left: 0; border-radius: 6px; background: linear-gradient(90deg, #fff, #efeeec); display: flex; flex-direction: column; align-items: center; justify-content: center; gap: 2px; }
.thumb i { width: 4px; height: 1px; background: #888; }
.status { height: 24px; flex: none; background: #f1f0ee; border-top: 1px solid #c6c4c1; display: flex; align-items: center; padding-left: 7px; }
```
